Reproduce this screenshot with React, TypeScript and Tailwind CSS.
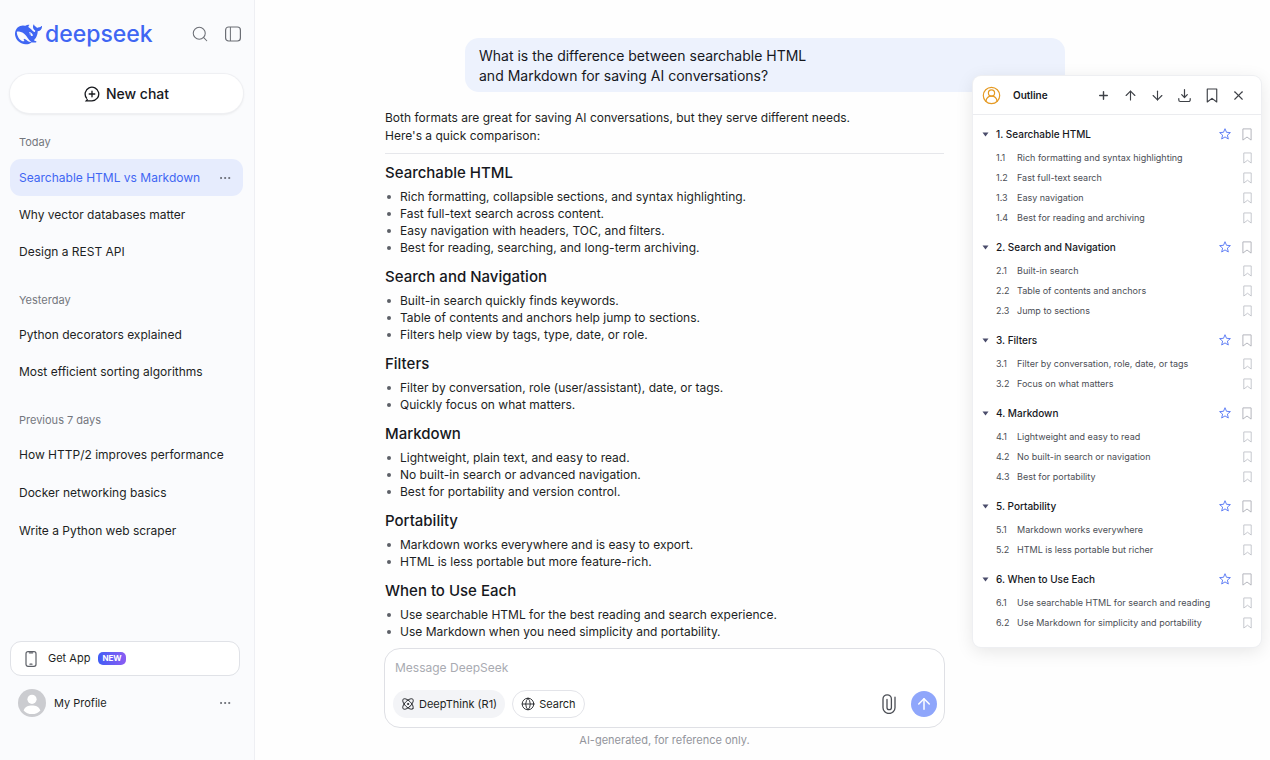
import React from 'react';
import { ArrowDown, ArrowUp, Atom, Ellipsis, Globe, Plus, Search, X } from 'lucide-react';

interface ChatGroup {
  label: string;
  chats: string[];
  labelClass: string;
  listClass: string;
}

interface Section {
  title: string;
  points: string[];
  outline: string[];
}

const chatGroups: ChatGroup[] = [
  {
    label: 'Today',
    chats: ['Searchable HTML vs Markdown', 'Why vector databases matter', 'Design a REST API'],
    labelClass: 'mt-[19px] mb-[7px]',
    listClass: '',
  },
  {
    label: 'Yesterday',
    chats: ['Python decorators explained', 'Most efficient sorting algorithms'],
    labelClass: 'mt-[20px] mb-[6px]',
    listClass: '',
  },
  {
    label: 'Previous 7 days',
    chats: ['How HTTP/2 improves performance', 'Docker networking basics', 'Write a Python web scraper'],
    labelClass: 'mt-[20px] mb-[6px]',
    listClass: 'gap-px',
  },
];

const sections: Section[] = [
  {
    title: 'Searchable HTML',
    points: [
      'Rich formatting, collapsible sections, and syntax highlighting.',
      'Fast full-text search across content.',
      'Easy navigation with headers, TOC, and filters.',
      'Best for reading, searching, and long-term archiving.',
    ],
    outline: [
      'Rich formatting and syntax highlighting',
      'Fast full-text search',
      'Easy navigation',
      'Best for reading and archiving',
    ],
  },
  {
    title: 'Search and Navigation',
    points: [
      'Built-in search quickly finds keywords.',
      'Table of contents and anchors help jump to sections.',
      'Filters help view by tags, type, date, or role.',
    ],
    outline: ['Built-in search', 'Table of contents and anchors', 'Jump to sections'],
  },
  {
    title: 'Filters',
    points: ['Filter by conversation, role (user/assistant), date, or tags.', 'Quickly focus on what matters.'],
    outline: ['Filter by conversation, role, date, or tags', 'Focus on what matters'],
  },
  {
    title: 'Markdown',
    points: [
      'Lightweight, plain text, and easy to read.',
      'No built-in search or advanced navigation.',
      'Best for portability and version control.',
    ],
    outline: ['Lightweight and easy to read', 'No built-in search or navigation', 'Best for portability'],
  },
  {
    title: 'Portability',
    points: ['Markdown works everywhere and is easy to export.', 'HTML is less portable but more feature-rich.'],
    outline: ['Markdown works everywhere', 'HTML is less portable but richer'],
  },
  {
    title: 'When to Use Each',
    points: [
      'Use searchable HTML for the best reading and search experience.',
      'Use Markdown when you need simplicity and portability.',
    ],
    outline: ['Use searchable HTML for search and reading', 'Use Markdown for simplicity and portability'],
  },
];

const WhaleLogo: React.FC = () => (
  <svg className="h-[27px] w-[27px]" viewBox="0 0 24 24" fill="currentColor" aria-hidden="true">
    <path d="M23.748 4.482c-.254-.124-.364.113-.512.234-.051.039-.094.09-.137.136-.372.397-.806.657-1.373.626-.829-.046-1.537.214-2.163.848-.133-.782-.575-1.248-1.247-1.548-.352-.156-.708-.311-.955-.65-.172-.241-.219-.51-.305-.774-.055-.16-.11-.323-.293-.35-.2-.031-.278.136-.356.276-.313.572-.434 1.202-.422 1.84.027 1.436.633 2.58 1.838 3.393.137.093.172.187.129.323-.082.28-.18.552-.266.833-.055.179-.137.217-.329.14a5.526 5.526 0 01-1.736-1.18c-.857-.828-1.631-1.742-2.597-2.458a11.365 11.365 0 00-.689-.471c-.985-.957.13-1.743.388-1.836.27-.098.093-.432-.779-.428-.872.004-1.67.295-2.687.684a3.055 3.055 0 01-.465.137 9.597 9.597 0 00-2.883-.102c-1.885.21-3.39 1.102-4.497 2.623C.082 8.606-.231 10.684.152 12.85c.403 2.284 1.569 4.175 3.36 5.653 1.858 1.533 3.997 2.284 6.438 2.14 1.482-.085 3.133-.284 4.994-1.86.47.234.962.327 1.78.397.63.059 1.236-.03 1.705-.128.735-.156.684-.837.419-.961-2.155-1.004-1.682-.595-2.113-.926 1.096-1.296 2.746-2.642 3.392-7.003.05-.347.007-.565 0-.845-.004-.17.035-.237.23-.256a4.173 4.173 0 001.545-.475c1.396-.763 1.96-2.015 2.093-3.517.02-.23-.004-.467-.247-.588zM11.581 18c-2.089-1.642-3.102-2.183-3.52-2.16-.392.024-.321.471-.235.763.09.288.207.486.371.739.114.167.192.416-.113.603-.673.416-1.842-.14-1.897-.167-1.361-.802-2.5-1.86-3.301-3.307-.774-1.393-1.224-2.887-1.298-4.482-.02-.386.093-.522.477-.592a4.696 4.696 0 011.529-.039c2.132.312 3.946 1.265 5.468 2.774.868.86 1.525 1.887 2.202 2.891.72 1.066 1.494 2.082 2.48 2.914.348.292.625.514.891.677-.802.09-2.14.11-3.054-.614zm1-6.44a.306.306 0 01.415-.287.302.302 0 01.2.288.306.306 0 01-.31.307.303.303 0 01-.304-.308zm3.11 1.596c-.2.081-.399.151-.59.16a1.245 1.245 0 01-.798-.254c-.274-.23-.47-.358-.552-.758a1.73 1.73 0 01.016-.588c.07-.327-.008-.537-.239-.727-.187-.156-.426-.199-.688-.199a.559.559 0 01-.254-.078c-.11-.054-.2-.19-.114-.358.028-.054.16-.186.192-.21.356-.202.767-.136 1.146.016.352.144.618.408 1.001.782.391.451.462.576.685.914.176.265.336.537.445.848.067.195-.019.354-.25.452z" />
  </svg>
);

const BookmarkIcon: React.FC<{ className: string }> = ({ className }) => (
  <svg className={className} viewBox="0 0 10 13" fill="none" stroke="currentColor" strokeWidth="1" strokeLinejoin="round">
    <path d="M0.9 0.9h8.2v11.2L5 9 0.9 12.1z" />
  </svg>
);

const StarIcon: React.FC = () => (
  <svg className="h-3 w-3" viewBox="0 0 12 12" fill="none" stroke="currentColor" strokeWidth="1" strokeLinejoin="round">
    <path d="M6 0.7l1.5 3.6 3.9 0.3-3 2.5 0.9 3.9L6 8.9 2.7 11l0.9-3.9-3-2.5 3.9-0.3z" />
  </svg>
);

const Sidebar: React.FC = () => (
  <aside className="flex w-[255px] shrink-0 flex-col border-r border-[#eeeff3] bg-[#fafbfd] pt-[20px] pr-[11px] pb-[43px] pl-[10px]">
    <div className="flex h-7 items-center pr-px pl-[5px]">
      <a href="#home" className="flex items-center gap-[3px] text-[#3f66f3]">
        <WhaleLogo />
        <span className="text-[23px] leading-7 font-medium">deepseek</span>
      </a>
      <button aria-label="Search chats" className="ml-auto text-[#6b6e75]">
        <Search className="h-[18px] w-[18px]" strokeWidth={1.4} />
      </button>
      <button aria-label="Toggle sidebar" className="ml-[15px] text-[#6b6e75]">
        <svg className="h-[18px] w-[18px]" viewBox="0 0 18 18" fill="none" stroke="currentColor" strokeWidth="1.2">
          <rect x="1.6" y="2" width="14.8" height="14" rx="3" />
          <path d="M6.4 2v14" strokeWidth="1" />
        </svg>
      </button>
    </div>

    <button className="mt-[26px] flex h-[39px] items-center justify-center gap-[6px] rounded-full bg-white text-sm font-medium text-[#16181d] shadow-[0_0_0_1px_#eff0f3,0_1px_3px_rgba(0,0,0,0.12)]">
      <svg className="h-4 w-4" viewBox="0 0 16 16" fill="none" stroke="currentColor" strokeWidth="1.3" strokeLinecap="round">
        <path d="M2.6 12.2A6.8 6.8 0 1 1 8 14.8H2.2l1-1.2M8 5.2v5.6M5.2 8h5.6" />
      </svg>
      New chat
    </button>

    <nav>
      {chatGroups.map((group) => (
        <div key={group.label}>
          <h2 className={`px-[9px] text-[11px] leading-5 text-[#74777e] ${group.labelClass}`}>{group.label}</h2>
          <ul className={`flex flex-col ${group.listClass}`}>
            {group.chats.map((chat) => {
              const active = chat === 'Searchable HTML vs Markdown';
              return (
                <li
                  key={chat}
                  className={`flex h-[37px] items-center justify-between rounded-[11px] pr-[11px] pl-[9px] text-xs ${
                    active ? 'bg-[#e6ecfd] text-[#3f66f3]' : 'text-[#1d1f24]'
                  }`}
                >
                  <a href="#chat">{chat}</a>
                  {active && (
                    <button aria-label="Chat options" className="text-[#5d6067]">
                      <Ellipsis className="h-[14px] w-[14px]" strokeWidth={1.6} />
                    </button>
                  )}
                </li>
              );
            })}
          </ul>
        </div>
      ))}
    </nav>

    <button className="mt-auto mr-[3px] flex h-[35px] items-center rounded-[11px] border border-[#e0e2e7] bg-white pl-[12px] text-[11px] text-[#1d1f24]">
      <svg className="h-4 w-4" viewBox="0 0 16 16" fill="none" stroke="#5d6067" strokeWidth="1.2" strokeLinecap="round">
        <rect x="3" y="0.7" width="10" height="14.6" rx="2" />
        <path d="M6.3 1.8h3.4M7 13.2h2" />
      </svg>
      <span className="ml-[9px]">Get App</span>
      <span className="ml-[8px] rounded-[5px] bg-gradient-to-r from-[#3d5cf5] to-[#8a5cf3] px-1 text-[8px] leading-[13px] font-bold text-white">
        NEW
      </span>
    </button>
    <div className="mt-[13px] flex h-7 items-center pr-[11px] pl-2 text-[11px] text-[#1d1f24]">
      <svg className="h-7 w-7" viewBox="0 0 28 28">
        <circle cx="14" cy="14" r="14" fill="#cbccd0" />
        <circle cx="14" cy="10.3" r="4.6" fill="#fff" />
        <path d="M5.6 21.5c1.4-4 4.6-5 8.4-5s7 1 8.4 5c-2 2.5-5 3.6-8.4 3.6s-6.4-1.1-8.4-3.6z" fill="#fff" />
      </svg>
      <span className="ml-2">My Profile</span>
      <button aria-label="Profile options" className="ml-auto text-[#5d6067]">
        <Ellipsis className="h-[14px] w-[14px]" strokeWidth={1.6} />
      </button>
    </div>
  </aside>
);

const Composer: React.FC = () => (
  <form className="flex flex-col rounded-2xl border border-[#dfe0e5] bg-white pt-[8px] pr-[7px] pb-[9px] pl-[8px]">
    <input
      aria-label="Message DeepSeek"
      placeholder="Message DeepSeek"
      className="h-5 px-[2px] text-xs outline-none placeholder:text-[#a9abb2]"
    />
    <div className="mt-[13px] flex items-center text-[11px] text-[#1d1f24]">
      <button type="button" className="flex h-7 items-center gap-1 rounded-full bg-[#f3f4f7] px-2">
        <Atom className="h-[14px] w-[14px]" strokeWidth={1.7} />
        DeepThink (R1)
      </button>
      <button type="button" className="ml-[7px] flex h-7 items-center gap-1 rounded-full border border-[#e3e4e9] px-2">
        <Globe className="h-[14px] w-[14px]" strokeWidth={1.5} />
        Search
      </button>
      <button type="button" aria-label="Attach file" className="ml-auto text-[#4b4e55]">
        <svg className="h-5 w-4" viewBox="0 0 16 20" fill="none" stroke="currentColor" strokeWidth="1.3" strokeLinecap="round">
          <path d="M14 3.2v10.5a6 5.8 0 0 1-12 0V5a4.2 4.2 0 0 1 8.4 0v8.5a2.2 2.2 0 0 1-4.4 0V5.5" />
        </svg>
      </button>
      <button
        type="submit"
        aria-label="Send"
        className="ml-[14px] flex h-[26px] w-[26px] items-center justify-center rounded-full bg-[#8fa6fb] text-white"
      >
        <ArrowUp className="h-[18px] w-[18px]" strokeWidth={2} />
      </button>
    </div>
  </form>
);

const OutlinePanel: React.FC = () => (
  <section className="absolute top-[76px] right-[9px] w-72 rounded-lg bg-white pb-[14px] shadow-[0_0_0_1px_#eeeff2,0_4px_18px_rgba(0,0,0,0.1)]">
    <header className="flex h-[39px] items-center border-b border-[#ebecef] pr-[15px] pl-[9px] text-[#3e4147]">
      <svg className="h-[19px] w-[19px]" viewBox="0 0 19 19" fill="none" stroke="#e59a24" strokeWidth="1.2" strokeLinecap="round">
        <circle cx="9.5" cy="9.5" r="8.2" />
        <circle cx="9.5" cy="7" r="3.1" />
        <path d="M4 15.2c0.3-3 2.3-5.1 5.5-5.1s5.2 2.1 5.5 5.1" />
      </svg>
      <h2 className="ml-[12px] text-[10px] font-semibold text-[#16181d]">Outline</h2>
      <div className="ml-auto flex items-center gap-3">
        <button aria-label="Add" className="flex w-[15px] justify-center">
          <Plus className="h-[13px] w-[13px]" strokeWidth={2.6} />
        </button>
        <button aria-label="Previous">
          <ArrowUp className="h-[15px] w-[15px]" strokeWidth={1.8} />
        </button>
        <button aria-label="Next">
          <ArrowDown className="h-[15px] w-[15px]" strokeWidth={1.8} />
        </button>
        <button aria-label="Download">
          <svg className="h-[15px] w-[15px]" viewBox="0 0 15 15" fill="none" stroke="currentColor" strokeWidth="1.2" strokeLinecap="round" strokeLinejoin="round">
            <path d="M7.5 1.5v7.8M4.7 6.7l2.8 2.8 2.8-2.8M1.8 10.5V12a1.5 1.5 0 0 0 1.5 1.500h8.400a1.500 1.500 0 0 0 1.500-1.500v-1.500" />
          </svg>
        </button>
        <button aria-label="Bookmarks" className="flex w-[15px] justify-center">
          <BookmarkIcon className="h-[15px] w-3" />
        </button>
        <button aria-label="Close">
          <X className="h-[15px] w-[15px]" strokeWidth={1.8} />
        </button>
      </div>
    </header>
    <ol className="mt-[5px] flex flex-col gap-[5px] pr-[9px] pl-[9px]">
      {sections.map((section, i) => (
        <li key={section.title}>
          <div className="flex h-7 items-center">
            <button aria-label={`Collapse ${section.title}`} className="text-[#4a4c6b]">
              <svg className="h-[7px] w-[7px]" viewBox="0 0 7 7" fill="currentColor">
                <path d="M0.5 1.5h6L3.5 5.5z" />
              </svg>
            </button>
            <h3 className="ml-[7px] text-[10px] font-medium text-[#16181d]">
              {i + 1}. {section.title}
            </h3>
            <button aria-label="Favourite" className="ml-auto text-[#6280f5]">
              <StarIcon />
            </button>
            <button aria-label="Bookmark" className="ml-[11px] text-[#b4b6bd]">
              <BookmarkIcon className="h-[13px] w-[10px]" />
            </button>
          </div>
          <ol>
            {section.outline.map((entry, j) => (
              <li key={entry} className="flex h-5 items-center pl-[14px] text-[9px] text-[#4b4e55]">
                <span className="w-[21px]">
                  {i + 1}.{j + 1}
                </span>
                <a href="#section">{entry}</a>
                <button aria-label="Bookmark" className="ml-auto flex w-[10px] justify-center text-[#c0c2c8]">
                  <BookmarkIcon className="h-3 w-[9px]" />
                </button>
              </li>
            ))}
          </ol>
        </li>
      ))}
    </ol>
  </section>
);

export default function App() {
  return (
    <div className="relative flex min-h-screen bg-[#fefefe] font-['Inter',sans-serif] text-[#1d1f24]">
      <Sidebar />
      <main className="flex flex-1 flex-col pt-[38px] pr-[205px] pl-[129px]">
        <p className="w-[600px] max-w-full self-end rounded-[14px] bg-[#edf2fd] px-[14px] pt-2 pb-[6px] text-sm leading-5 text-[#16181d]">
          What is the difference between searchable HTML
          <br />
          and Markdown for saving AI conversations?
        </p>
        <div className="mr-[120px] flex flex-1 flex-col">
          <article className="mt-[17px] px-px text-xs">
            <p className="leading-[18px]">
              Both formats are great for saving AI conversations, but they serve different needs.
              <br />
              Here's a quick comparison:
            </p>
            <hr className="mt-[8px] mb-[8px] border-[#e6e7eb]" />
            <div className="flex flex-col gap-[10px]">
              {sections.map((section) => (
                <section key={section.title}>
                  <h2 className="text-[15px] leading-[22px] font-medium text-[#16181d]">{section.title}</h2>
                  <ul className="mt-1 leading-[17px]">
                    {section.points.map((point) => (
                      <li key={point} className="flex items-center gap-[9px] pl-[2px]">
                        <span className="h-1 w-1 rounded-full bg-[#5d6067]" />
                        {point}
                      </li>
                    ))}
                  </ul>
                </section>
              ))}
            </div>
          </article>
          <div className="mt-auto pb-[11px]">
            <Composer />
            <p className="mt-[4px] text-center text-[11px] leading-[17px] text-[#93959c]">AI-generated, for reference only.</p>
          </div>
        </div>
      </main>
      <OutlinePanel />
    </div>
  );
}
